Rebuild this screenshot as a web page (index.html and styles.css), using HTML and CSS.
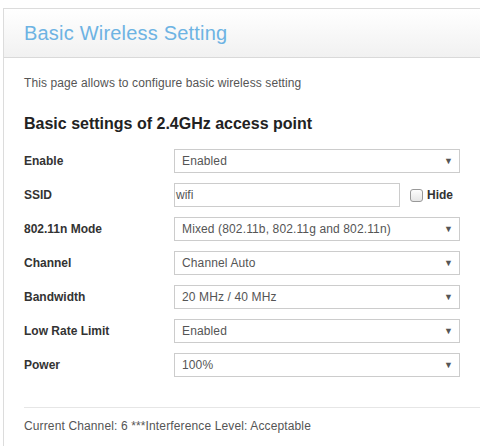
FILE: index.html
```html
<!DOCTYPE html>
<html>
<head>
<meta charset="utf-8">
<link rel="stylesheet" href="styles.css">
</head>
<body>
<div class="panel">
  <div class="panel-head"><h1 class="title">Basic Wireless Setting</h1></div>
  <div class="panel-body">
    <p class="desc">This page allows to configure basic wireless setting</p>
    <h2 class="section">Basic settings of 2.4GHz access point</h2>
    <div class="form">
      <div class="label">Enable</div>
      <div class="select"><span>Enabled</span><span class="arrow">▼</span></div>

      <div class="label">SSID</div>
      <div class="ssid-row">
        <div class="input">wifi</div>
        <label class="hide"><span class="check"></span>Hide</label>
      </div>

      <div class="label">802.11n Mode</div>
      <div class="select"><span>Mixed (802.11b, 802.11g and 802.11n)</span><span class="arrow">▼</span></div>

      <div class="label">Channel</div>
      <div class="select"><span>Channel Auto</span><span class="arrow">▼</span></div>

      <div class="label">Bandwidth</div>
      <div class="select"><span>20 MHz / 40 MHz</span><span class="arrow">▼</span></div>

      <div class="label">Low Rate Limit</div>
      <div class="select"><span>Enabled</span><span class="arrow">▼</span></div>

      <div class="label">Power</div>
      <div class="select"><span>100%</span><span class="arrow">▼</span></div>
    </div>
    <div class="footer">Current Channel: 6 ***Interference Level: Acceptable</div>
  </div>
</div>
</body>
</html>
```
FILE: styles.css
```css
html, body {
  margin: 0;
  padding: 0;
  height: 100%;
  overflow: hidden;
  background: #fff;
  font-family: "Liberation Sans", Arial, sans-serif;
}
body {
  display: flex;
  flex-direction: column;
  padding: 8px 0 0 3px;
  box-sizing: border-box;
}
.panel {
  flex: 1;
  border-top: 1px solid #dcdcdc;
  border-left: 1px solid #dcdcdc;
  background: #fff;
}
.panel-head {
  height: 48px;
  display: flex;
  align-items: center;
  padding-left: 20px;
  background: linear-gradient(#ffffff, #f1f1f1);
  border-bottom: 1px solid #d9d9d9;
}
.title {
  margin: 0;
  font-size: 20px;
  font-weight: normal;
  color: #6db3e3;
  letter-spacing: 0.2px;
}
.panel-body {
  padding: 18px 0 0 20px;
}
.desc {
  margin: 0;
  font-size: 12px;
  line-height: 14px;
  color: #555;
  letter-spacing: 0.1px;
}
.section {
  margin: 24px 0 0 0;
  font-size: 16px;
  line-height: 19px;
  font-weight: bold;
  color: #222;
}
.form {
  margin-top: 16px;
  display: grid;
  grid-template-columns: 150px 286px;
  grid-auto-rows: 24px;
  row-gap: 10px;
  align-items: center;
}
.label {
  font-size: 12px;
  font-weight: bold;
  color: #333;
}
.select {
  box-sizing: border-box;
  height: 24px;
  border: 1px solid #cccccc;
  display: flex;
  align-items: center;
  justify-content: space-between;
  padding: 0 6px 0 7px;
  font-size: 12px;
  color: #555;
  letter-spacing: 0.13px;
}
.arrow {
  font-size: 9px;
  color: #555;
}
.ssid-row {
  display: flex;
  align-items: center;
}
.input {
  box-sizing: border-box;
  width: 226px;
  height: 24px;
  border: 1px solid #cccccc;
  padding-left: 1px;
  display: flex;
  align-items: center;
  font-size: 12px;
  color: #555;
}
.hide {
  display: flex;
  align-items: center;
  margin-left: 10px;
  font-size: 12px;
  font-weight: bold;
  color: #333;
}
.check {
  box-sizing: border-box;
  width: 13px;
  height: 13px;
  border: 1px solid #999;
  border-radius: 3px;
  background: linear-gradient(#fdfdfd, #e6e6e6);
  margin-right: 4px;
}
.footer {
  margin-top: 30px;
  border-top: 1px solid #e6e6e6;
  padding-top: 11px;
  font-size: 12px;
  line-height: 14px;
  color: #555;
  letter-spacing: 0.13px;
}
```
